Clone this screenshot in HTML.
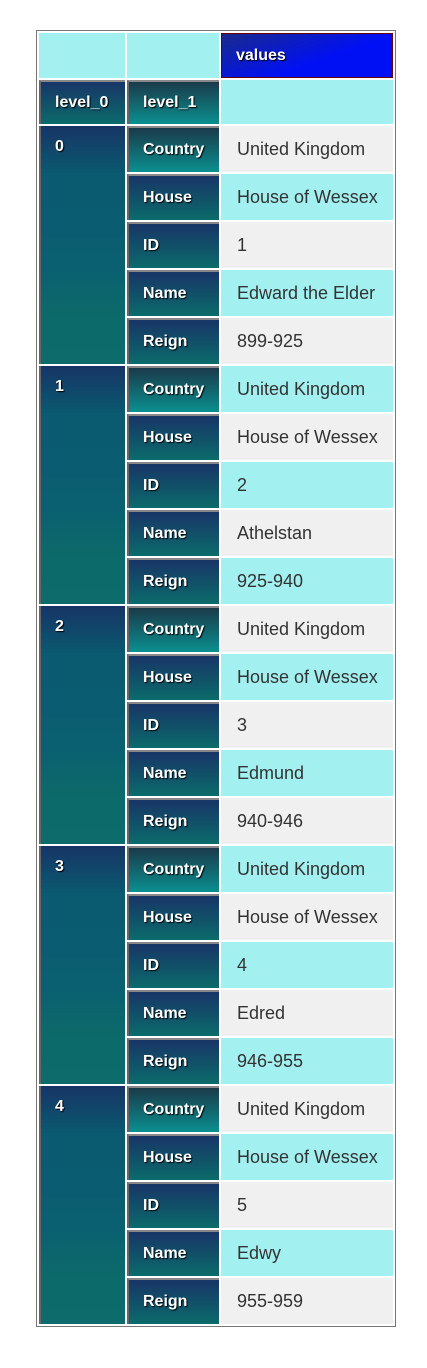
<!DOCTYPE html>
<html><head><style>
body{margin:0;background:#fff;font-family:"Liberation Sans",Arial,sans-serif;}
table{position:absolute;left:36px;top:30px;border:1px solid #777;border-collapse:separate;border-spacing:2px;width:360px;}
td,th{padding:0 0 0 16px;text-align:left;vertical-align:middle;height:46px;box-sizing:border-box;}
th{color:#fff;font-weight:bold;font-size:16px;text-shadow:1px 1px 1px #000;padding-left:14px;}
.e{background:#a3f0f0;}
.v{background:linear-gradient(160deg,#1a2a8a,#0010f5 60%);border:1px solid #600;}
.l{background:linear-gradient(to bottom,#183566,#0b6b6b);border-left:2px solid #666;border-top:2px solid #888;}
.c{background:linear-gradient(to bottom,#1b3a4a,#0a8f8f);border-left:2px solid #666;border-top:2px solid #888;}
.i{background:linear-gradient(to bottom,#173466,#0a5a70 20%,#0a5c70 40%,#0a6070 60%,#0c6a6a 80%,#0d6b6b);vertical-align:top;padding-top:12px;border-left:2px solid #666;}
td{font-size:18px;color:#333;}
.g{background:#f0f0f0;}.y{background:#a3f0f0;}
</style></head><body>
<table>
<tr style="height:45px"><th class="e" style="width:86px;height:45px"></th><th class="e" style="width:92px;height:45px"></th><th class="v" style="height:45px">values</th></tr>
<tr style="height:44px"><th class="l" style="height:44px">level_0</th><th class="c" style="height:44px">level_1</th><td class="y" style="height:44px"></td></tr>
<tr><th class="i" rowspan="5">0</th><th class="c">Country</th><td class="g">United Kingdom</td></tr>
<tr><th class="l">House</th><td class="y">House of Wessex</td></tr>
<tr><th class="l">ID</th><td class="g">1</td></tr>
<tr><th class="l">Name</th><td class="y">Edward the Elder</td></tr>
<tr><th class="l">Reign</th><td class="g">899-925</td></tr>
<tr><th class="i" rowspan="5">1</th><th class="c">Country</th><td class="y">United Kingdom</td></tr>
<tr><th class="l">House</th><td class="g">House of Wessex</td></tr>
<tr><th class="l">ID</th><td class="y">2</td></tr>
<tr><th class="l">Name</th><td class="g">Athelstan</td></tr>
<tr><th class="l">Reign</th><td class="y">925-940</td></tr>
<tr><th class="i" rowspan="5">2</th><th class="c">Country</th><td class="g">United Kingdom</td></tr>
<tr><th class="l">House</th><td class="y">House of Wessex</td></tr>
<tr><th class="l">ID</th><td class="g">3</td></tr>
<tr><th class="l">Name</th><td class="y">Edmund</td></tr>
<tr><th class="l">Reign</th><td class="g">940-946</td></tr>
<tr><th class="i" rowspan="5">3</th><th class="c">Country</th><td class="y">United Kingdom</td></tr>
<tr><th class="l">House</th><td class="g">House of Wessex</td></tr>
<tr><th class="l">ID</th><td class="y">4</td></tr>
<tr><th class="l">Name</th><td class="g">Edred</td></tr>
<tr><th class="l">Reign</th><td class="y">946-955</td></tr>
<tr><th class="i" rowspan="5">4</th><th class="c">Country</th><td class="g">United Kingdom</td></tr>
<tr><th class="l">House</th><td class="y">House of Wessex</td></tr>
<tr><th class="l">ID</th><td class="g">5</td></tr>
<tr><th class="l">Name</th><td class="y">Edwy</td></tr>
<tr><th class="l">Reign</th><td class="g">955-959</td></tr>
</table>
</body></html>
